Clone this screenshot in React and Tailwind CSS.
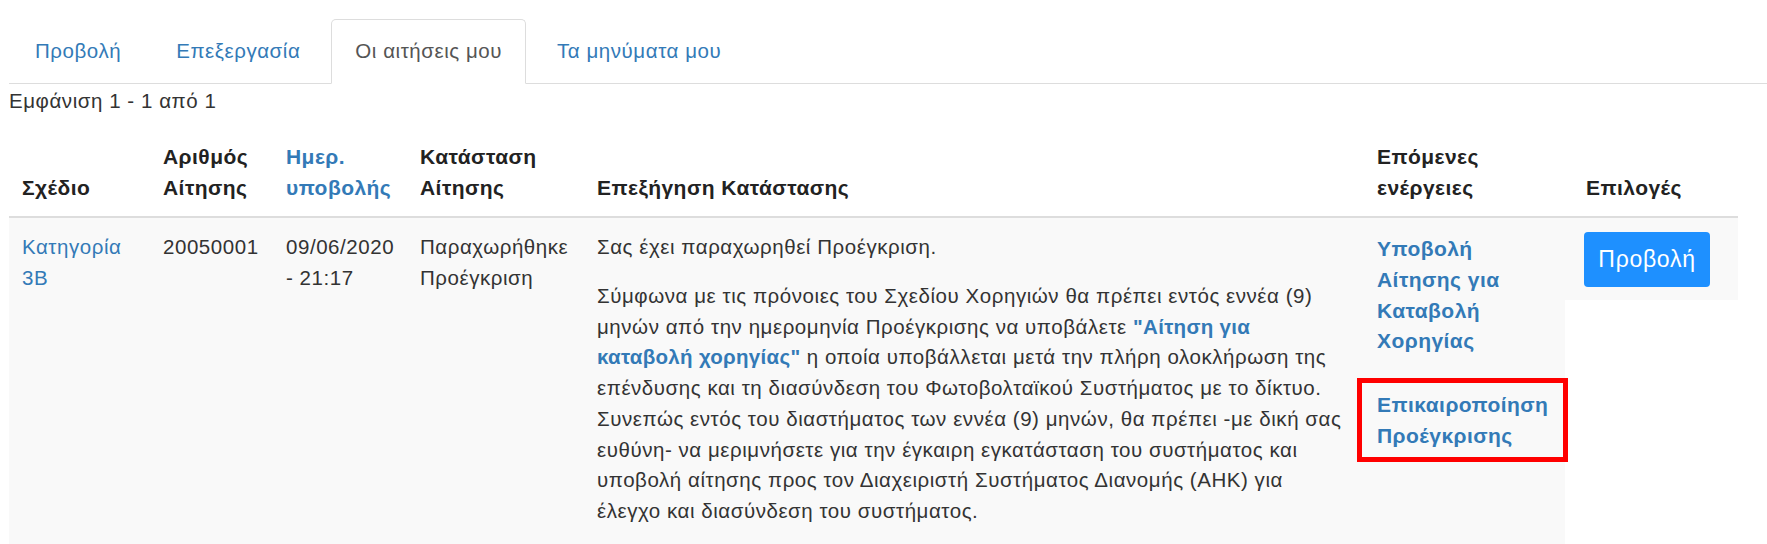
import React from "react";

const BODY = "font-['Liberation_Sans',Arial,sans-serif]";

function Tab({ label, active }) {
  if (active) {
    return (
      <div className="mr-[7px] -mb-px rounded-t-[5px] border border-[#ddd] border-b-white bg-white px-[23px] py-[16px] text-[20.5px] leading-[30px] tracking-[0.55px] text-[#555]">
        {label}
      </div>
    );
  }
  return (
    <div className="mr-[7px] border border-transparent px-[23px] py-[16px] text-[20.5px] leading-[30px] tracking-[0.55px] text-[#337ab7]">
      {label}
    </div>
  );
}

export default function App() {
  return (
    <div className={`h-[544px] w-[1767px] overflow-hidden bg-white text-[#333] ${BODY}`}>
      {/* Tabs */}
      <div className="ml-[9px] flex border-b border-[#ddd] pt-[19px] pl-[2px]">
        <Tab label="Προβολή" />
        <Tab label="Επεξεργασία" />
        <Tab label="Οι αιτήσεις μου" active />
        <Tab label="Τα μηνύματα μου" />
      </div>

      <div className="ml-[9px] mt-[2px] text-[20.5px] leading-[30px] tracking-[0.55px] text-[#333]">
        Εμφάνιση 1 - 1 από 1
      </div>

      {/* Table */}
      <div className="ml-[9px] mt-[25px] w-[1729px]">
        <div className="grid grid-cols-[141px_123px_134px_177px_780px_201px_173px] items-end border-b-2 border-[#ddd] text-[21px] leading-[31px] tracking-[0.45px] font-bold text-[#222]">
          <div className="px-[13px] pb-[13px]">Σχέδιο</div>
          <div className="px-[13px] pb-[13px]">
            Αριθμός
            <br />
            Αίτησης
          </div>
          <div className="px-[13px] pb-[13px] text-[#337ab7]">
            Ημερ.
            <br />
            υποβολής
          </div>
          <div className="px-[13px] pb-[13px]">
            Κατάσταση
            <br />
            Αίτησης
          </div>
          <div className="px-[13px] pb-[13px]">Επεξήγηση Κατάστασης</div>
          <div className="px-[13px] pb-[13px]">
            Επόμενες
            <br />
            ενέργειες
          </div>
          <div className="pl-[21px] pb-[13px]">Επιλογές</div>
        </div>

        <div className="grid grid-cols-[141px_123px_134px_177px_780px_201px_173px] text-[20.5px] leading-[30.75px] tracking-[0.55px] text-[#333]">
          <div className="bg-[#f9f9f9] px-[13px] pt-[14px] text-[#337ab7]">
            Κατηγορία
            <br />
            3Β
          </div>
          <div className="bg-[#f9f9f9] px-[13px] pt-[14px]">20050001</div>
          <div className="bg-[#f9f9f9] px-[13px] pt-[14px]">
            09/06/2020
            <br />- 21:17
          </div>
          <div className="bg-[#f9f9f9] px-[13px] pt-[14px]">
            Παραχωρήθηκε
            <br />
            Προέγκριση
          </div>
          <div className="bg-[#f9f9f9] px-[13px] pt-[14px] pb-[30px] whitespace-nowrap">
            <p className="mb-[18px]">Σας έχει παραχωρηθεί Προέγκριση.</p>
            <p>
              Σύμφωνα με τις πρόνοιες του Σχεδίου Χορηγιών θα πρέπει εντός εννέα (9)
              <br />
              μηνών από την ημερομηνία Προέγκρισης να υποβάλετε{" "}
              <span className="font-bold text-[#337ab7] tracking-[0.3px]">"Αίτηση για</span>
              <br />
              <span className="font-bold text-[#337ab7] tracking-[0.3px]">καταβολή χορηγίας"</span>{" "}
              η οποία υποβάλλεται μετά την πλήρη ολοκλήρωση της
              <br />
              επένδυσης και τη διασύνδεση του Φωτοβολταϊκού Συστήματος με το δίκτυο.
              <br />
              Συνεπώς εντός του διαστήματος των εννέα (9) μηνών, θα πρέπει -με δική σας
              <br />
              ευθύνη- να μεριμνήσετε για την έγκαιρη εγκατάσταση του συστήματος και
              <br />
              υποβολή αίτησης προς τον Διαχειριστή Συστήματος Διανομής (ΑΗΚ) για
              <br />
              έλεγχο και διασύνδεση του συστήματος.
            </p>
          </div>
          <div className="bg-[#f9f9f9] px-[13px] pt-[16px] text-[21px] font-bold tracking-[0.45px] text-[#337ab7]">
            <div>
              Υποβολή
              <br />
              Αίτησης για
              <br />
              Καταβολή
              <br />
              Χορηγίας
            </div>
            <div className="relative mt-[33px]">
              Επικαιροποίηση
              <br />
              Προέγκρισης
              <div className="pointer-events-none absolute -left-[20px] -right-[16px] -top-[12px] -bottom-[10px] border-[5px] border-[#ff0000]" />
            </div>
          </div>
          <div className="self-start bg-[#f9f9f9] pl-[19px] pt-[14px] pb-[13px]">
            <button className="h-[55px] w-[126px] rounded-[4px] bg-[#1e90ff] text-[23px] tracking-[0.7px] text-white">
              Προβολή
            </button>
          </div>
        </div>
      </div>
    </div>
  );
}
